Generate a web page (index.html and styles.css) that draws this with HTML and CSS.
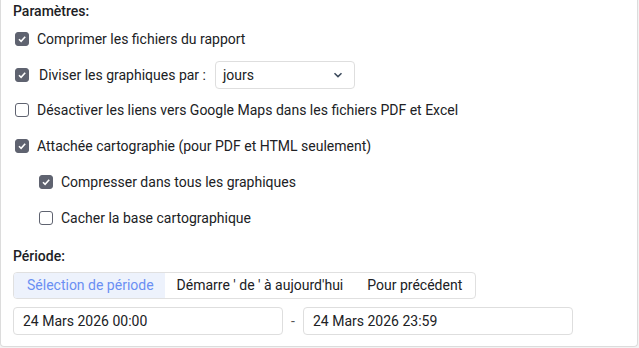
FILE: index.html
```html
<!DOCTYPE html>
<html lang="fr">
<head>
  <meta charset="UTF-8" />
  <title>Paramètres du rapport</title>
  <link rel="stylesheet" href="styles.css">
</head>
<body>
  <div class="panel">
    <div class="title">Paramètres:</div>

    <label class="row">
      <span class="box checked"><svg viewBox="0 0 12 12"><path d="M3 6.2 L5.1 8.3 L9.2 3.8" /></svg></span>
      Comprimer les fichiers du rapport
    </label>

    <div class="row row-select">
      <span class="box checked"><svg viewBox="0 0 12 12"><path d="M3 6.2 L5.1 8.3 L9.2 3.8" /></svg></span>
      <span class="split-label">Diviser les graphiques par :</span>
      <div class="select">
        <span>jours</span>
        <svg class="chevron" viewBox="0 0 10 6"><path d="M1.5 1.2 L5 4.6 L8.5 1.2" /></svg>
      </div>
    </div>

    <label class="row">
      <span class="box"></span>
      Désactiver les liens vers Google Maps dans les fichiers PDF et Excel
    </label>

    <label class="row">
      <span class="box checked"><svg viewBox="0 0 12 12"><path d="M3 6.2 L5.1 8.3 L9.2 3.8" /></svg></span>
      Attachée cartographie (pour PDF et HTML seulement)
    </label>

    <label class="row sub">
      <span class="box checked"><svg viewBox="0 0 12 12"><path d="M3 6.2 L5.1 8.3 L9.2 3.8" /></svg></span>
      Compresser dans tous les graphiques
    </label>

    <label class="row sub">
      <span class="box"></span>
      Cacher la base cartographique
    </label>

    <div class="title period-title">Période:</div>

    <div class="tabs">
      <div class="tab active">Sélection de période</div>
      <div class="tab">Démarre ' de ' à aujourd'hui</div>
      <div class="tab">Pour précédent</div>
    </div>

    <div class="dates">
      <div class="date-input">24 Mars 2026 00:00</div>
      <span class="dash">-</span>
      <div class="date-input">24 Mars 2026 23:59</div>
    </div>
  </div>
</body>
</html>
```

FILE: styles.css
```css
body {
  margin: 0;
  font-family: Roboto, "Liberation Sans", Arial, sans-serif;
  font-size: 14px;
  color: #202124;
  background: #f3f3f3;
}

.panel {
  width: 638px;
  height: 347px;
  box-sizing: border-box;
  background: #fff;
  border: 1px solid #dcdcdc;
  border-top: none;
  border-radius: 0 0 4px 4px;
  padding: 0 12px;
}

.title {
  height: 21px;
  line-height: 23px;
  font-weight: 500;
}

.row {
  display: flex;
  align-items: center;
  height: 36px;
  padding-left: 2px;
}

.row-select {
  height: 35px;
}

.row.sub {
  padding-left: 26px;
}

.box {
  width: 12px;
  height: 12px;
  border: 1px solid #5f6370;
  border-radius: 3px;
  margin-right: 8px;
  flex-shrink: 0;
  display: flex;
}

.box.checked {
  background: #5f6370;
}

.box svg {
  width: 12px;
  height: 12px;
}

.box path {
  fill: none;
  stroke: #fff;
  stroke-width: 1.6;
}

.split-label {
  margin-left: 2px;
  margin-right: 9px;
}

.select {
  width: 120px;
  height: 26px;
  border: 1px solid #dedede;
  border-radius: 4px;
  display: flex;
  align-items: center;
  justify-content: space-between;
  padding: 0 11px 0 7px;
}

.chevron {
  width: 10px;
  height: 6px;
}

.chevron path {
  fill: none;
  stroke: #3c4a5c;
  stroke-width: 1.5;
}

.period-title {
  margin-top: 10px;
  height: 20px;
  line-height: 20px;
}

.tabs {
  display: inline-flex;
  margin-top: 6px;
  border: 1px solid #e0e0e0;
  border-radius: 4px;
  overflow: hidden;
  height: 25px;
}

.tab {
  line-height: 25px;
  padding: 0 12px;
}

.tab.active {
  padding: 0 11px 0 13px;
  background: #edf2fc;
  color: #6a8ff3;
}

.tab:last-child {
  padding: 0 13px 0 12px;
}

.dates {
  display: flex;
  align-items: center;
  margin-top: 8px;
}

.date-input {
  width: 270px;
  height: 28px;
  line-height: 26px;
  border: 1px solid #dedede;
  border-radius: 4px;
  padding: 0 0 0 9px;
  box-sizing: border-box;
}

.dash {
  width: 20px;
  text-align: center;
  color: #555;
}
```
